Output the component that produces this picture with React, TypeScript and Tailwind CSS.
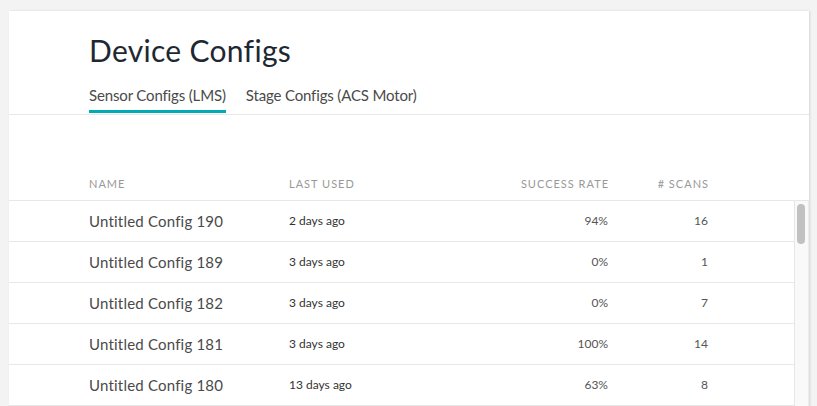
import React from "react";

const rows = [
  { name: "Untitled Config 190", used: "2 days ago", rate: "94%", scans: "16" },
  { name: "Untitled Config 189", used: "3 days ago", rate: "0%", scans: "1" },
  { name: "Untitled Config 182", used: "3 days ago", rate: "0%", scans: "7" },
  { name: "Untitled Config 181", used: "3 days ago", rate: "100%", scans: "14" },
  { name: "Untitled Config 180", used: "13 days ago", rate: "63%", scans: "8" },
  { name: "Untitled Config 179", used: "14 days ago", rate: "50%", scans: "4" },
];

export default function App() {
  return (
    <div
      className="min-h-[406px] w-[817px] overflow-hidden bg-[#f3f3f3] pl-[9px] pt-[11px]"
      style={{ fontFamily: "Lato, 'Noto Sans', sans-serif" }}
    >
      <div className="w-[800px] bg-white shadow-[1px_0_2px_rgba(0,0,0,0.12)]">
        <div className="border-b border-[#e8e8e8] pb-[1px] pl-[80px] pt-[21px]">
          <h1 className="text-[30px] leading-[36px] font-normal tracking-[0.3px] text-[#1e2832]">
            Device Configs
          </h1>
          <div className="mt-[17px] flex gap-[20px]">
            <div className="flex flex-col">
              <span className="text-[15px] leading-[20px] tracking-[-0.15px] text-[#4a4a4a]">Sensor Configs (LMS)</span>
              <span className="mt-[5px] h-[3px] bg-[#00abb5]" />
            </div>
            <div className="flex flex-col">
              <span className="text-[15px] leading-[20px] tracking-[-0.15px] text-[#4a4a4a]">Stage Configs (ACS Motor)</span>
            </div>
          </div>
        </div>
        <div className="h-[86px] border-b border-[#e8e8e8]">
          <div className="flex h-full items-end pb-[9px] pl-[80px] text-[11px] leading-[14px] tracking-[1px] text-[#999]">
            <span className="w-[200px]">NAME</span>
            <span className="w-[150px]">LAST USED</span>
            <span className="w-[170px] text-right">SUCCESS RATE</span>
            <span className="w-[100px] text-right"># SCANS</span>
          </div>
        </div>
        <div className="flex">
          <div className="w-[786px] border-r border-[#e6e6e6]">
            {rows.map((r) => (
              <div key={r.name} className="flex h-[41px] items-center border-b border-[#e8e8e8] pl-[80px]">
                <span className="w-[200px] text-[15px] tracking-[0.2px] text-[#4a4a4a]">{r.name}</span>
                <span className="w-[150px] text-[12px] text-[#333]">{r.used}</span>
                <span className="w-[170px] pr-[1px] text-right text-[12px] text-[#555]">{r.rate}</span>
                <span className="w-[100px] pr-[1px] text-right text-[12px] text-[#555]">{r.scans}</span>
              </div>
            ))}
          </div>
          <div className="w-[14px] border-r border-[#ececec] bg-[#f9f9f9] pl-[2px] pt-[3px]">
            <div className="h-[40px] w-[8px] rounded-full bg-[#c1c1c1]" />
          </div>
        </div>
      </div>
    </div>
  );
}
